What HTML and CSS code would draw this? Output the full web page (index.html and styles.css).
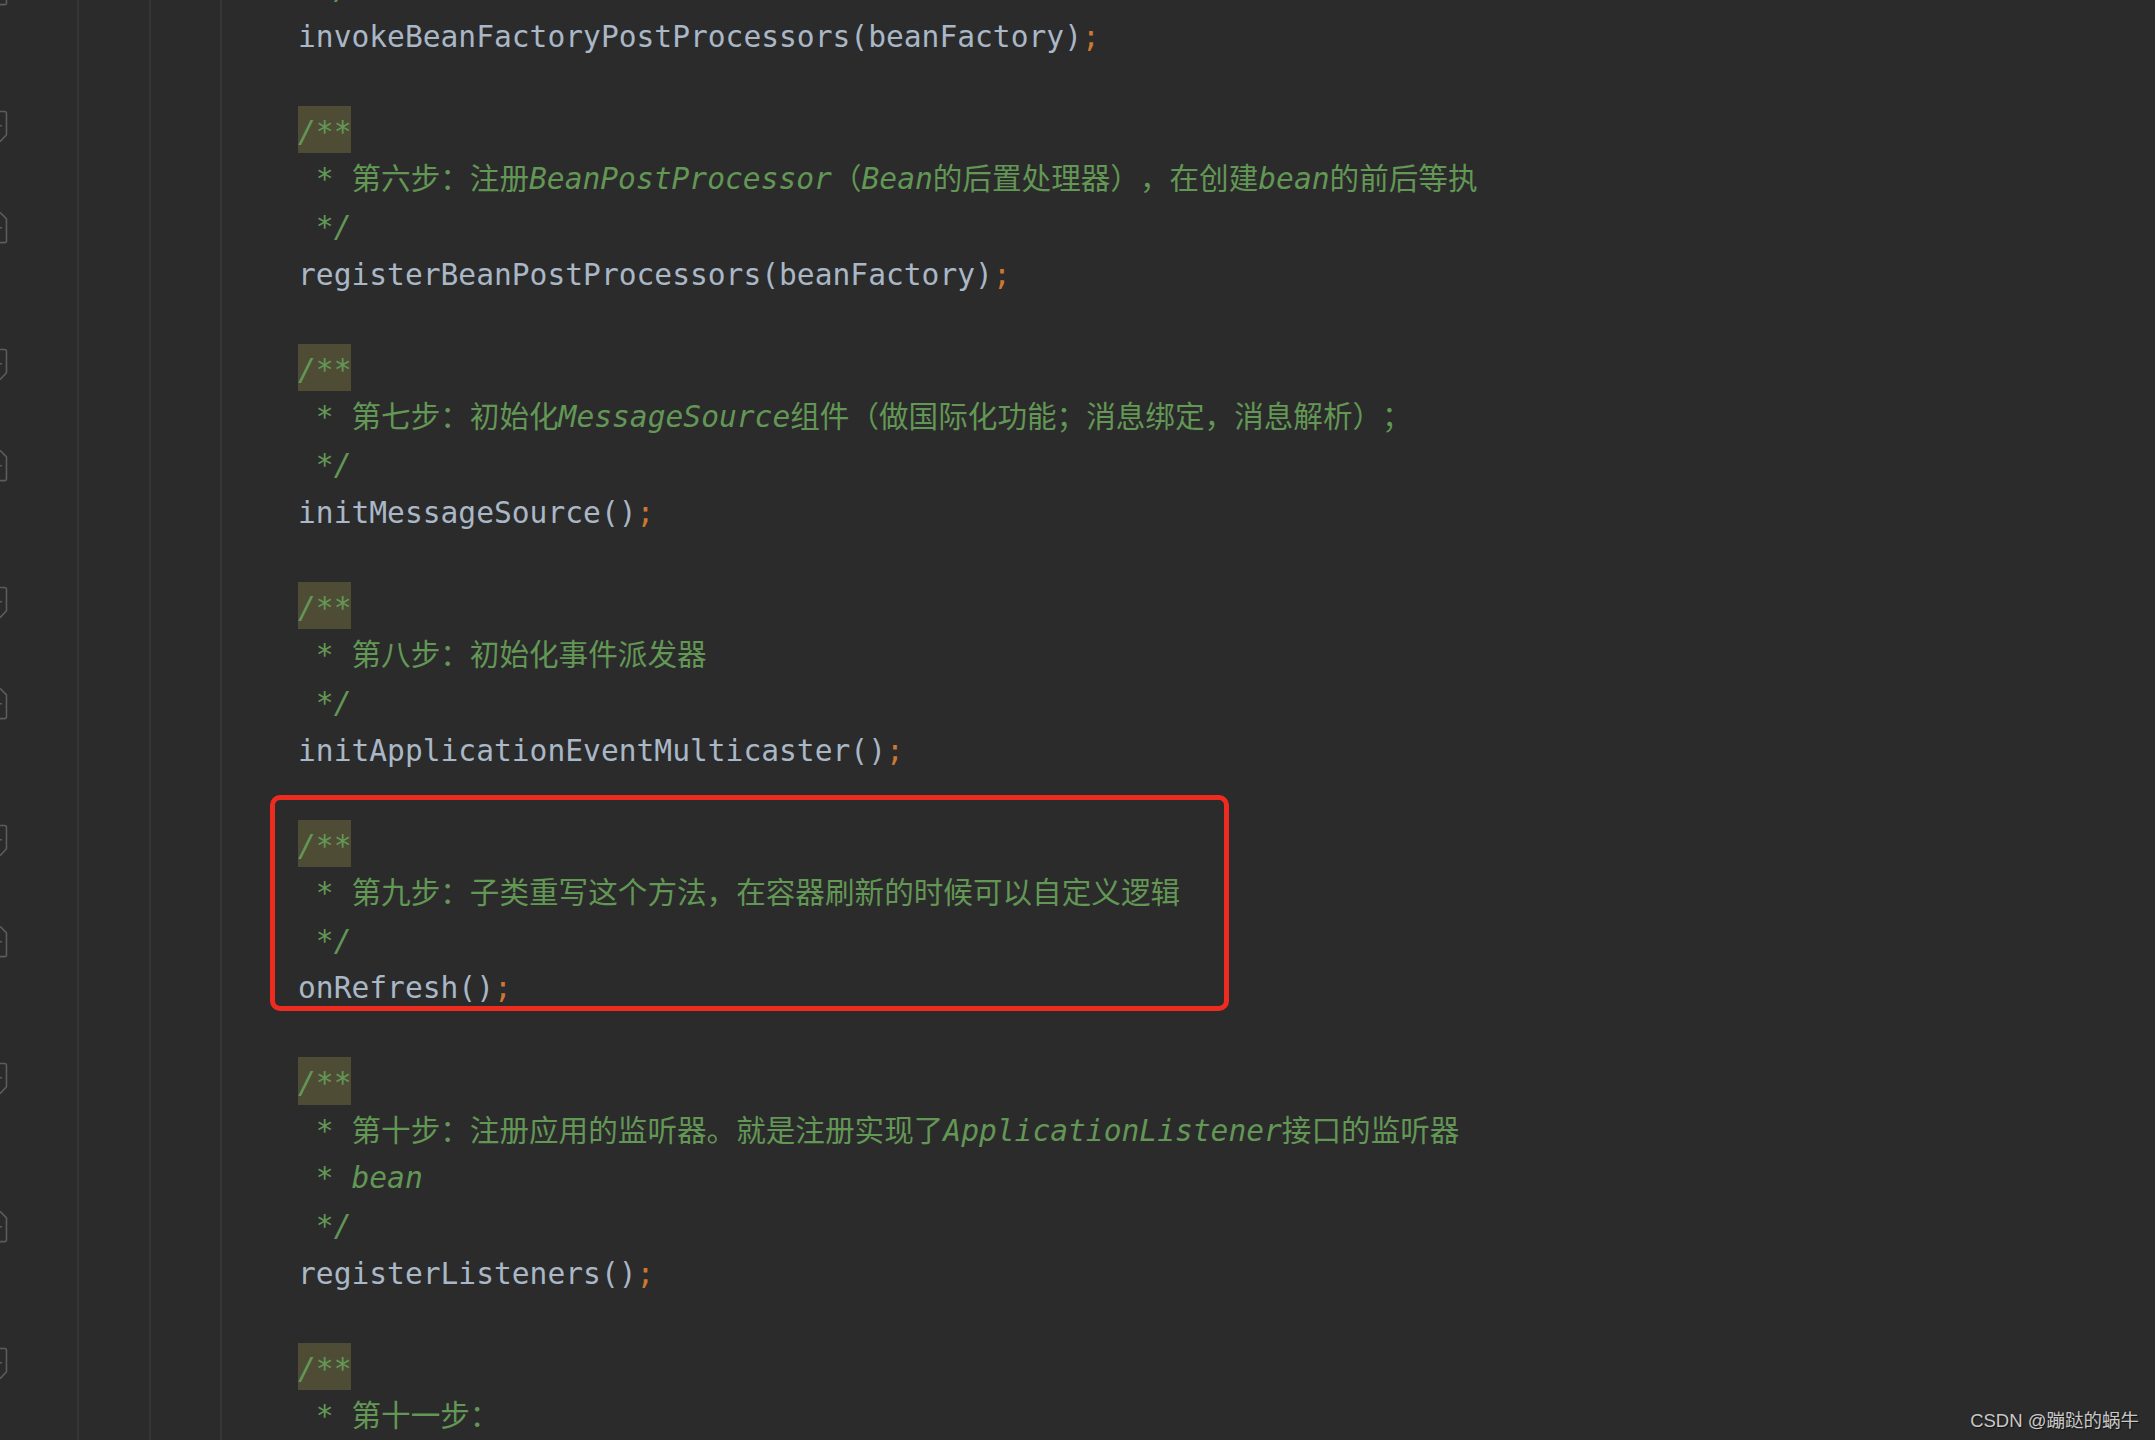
FILE: index.html
```html
<!DOCTYPE html>
<html lang="en">
<head>
    <meta charset="UTF-8">
    <meta name="viewport" content="width=device-width, initial-scale=1.0">
    <title>refresh()</title>
    <link rel="stylesheet" href="styles.css">
</head>
<body>
    <div class="editor">
        <!-- fold markers, one row per text line -->
        <div class="gutter">
            <div class="gl"><svg class="fold" viewBox="0 0 8 48"><path d="M0 11.5 L6.5 18 V40 Q6.5 42 4.5 42 H0 M0 27 H2"/></svg></div>
            <div class="gl"></div>
            <div class="gl"></div>
            <div class="gl"><svg class="fold" viewBox="0 0 8 48"><path d="M0 5.5 H4.5 Q6.5 5.5 6.5 7.5 V29 L0 36 M0 20 H2"/></svg></div>
            <div class="gl"></div>
            <div class="gl"><svg class="fold" viewBox="0 0 8 48"><path d="M0 11.5 L6.5 18 V40 Q6.5 42 4.5 42 H0 M0 27 H2"/></svg></div>
            <div class="gl"></div>
            <div class="gl"></div>
            <div class="gl"><svg class="fold" viewBox="0 0 8 48"><path d="M0 5.5 H4.5 Q6.5 5.5 6.5 7.5 V29 L0 36 M0 20 H2"/></svg></div>
            <div class="gl"></div>
            <div class="gl"><svg class="fold" viewBox="0 0 8 48"><path d="M0 11.5 L6.5 18 V40 Q6.5 42 4.5 42 H0 M0 27 H2"/></svg></div>
            <div class="gl"></div>
            <div class="gl"></div>
            <div class="gl"><svg class="fold" viewBox="0 0 8 48"><path d="M0 5.5 H4.5 Q6.5 5.5 6.5 7.5 V29 L0 36 M0 20 H2"/></svg></div>
            <div class="gl"></div>
            <div class="gl"><svg class="fold" viewBox="0 0 8 48"><path d="M0 11.5 L6.5 18 V40 Q6.5 42 4.5 42 H0 M0 27 H2"/></svg></div>
            <div class="gl"></div>
            <div class="gl"></div>
            <div class="gl"><svg class="fold" viewBox="0 0 8 48"><path d="M0 5.5 H4.5 Q6.5 5.5 6.5 7.5 V29 L0 36 M0 20 H2"/></svg></div>
            <div class="gl"></div>
            <div class="gl"><svg class="fold" viewBox="0 0 8 48"><path d="M0 11.5 L6.5 18 V40 Q6.5 42 4.5 42 H0 M0 27 H2"/></svg></div>
            <div class="gl"></div>
            <div class="gl"></div>
            <div class="gl"><svg class="fold" viewBox="0 0 8 48"><path d="M0 5.5 H4.5 Q6.5 5.5 6.5 7.5 V29 L0 36 M0 20 H2"/></svg></div>
            <div class="gl"></div>
            <div class="gl"></div>
            <div class="gl"><svg class="fold" viewBox="0 0 8 48"><path d="M0 11.5 L6.5 18 V40 Q6.5 42 4.5 42 H0 M0 27 H2"/></svg></div>
            <div class="gl"></div>
            <div class="gl"></div>
            <div class="gl"><svg class="fold" viewBox="0 0 8 48"><path d="M0 5.5 H4.5 Q6.5 5.5 6.5 7.5 V29 L0 36 M0 20 H2"/></svg></div>
            <div class="gl"></div>
        </div>

        <div class="text">
            <div class="line doc"> */</div>
            <div class="line">invokeBeanFactoryPostProcessors(beanFactory)<span class="semi">;</span></div>
            <div class="line"></div>
            <div class="line doc"><span class="open">/**</span></div>
            <div class="line doc"> * 第六步：注册BeanPostProcessor（Bean的后置处理器），在创建bean的前后等执</div>
            <div class="line doc"> */</div>
            <div class="line">registerBeanPostProcessors(beanFactory)<span class="semi">;</span></div>
            <div class="line"></div>
            <div class="line doc"><span class="open">/**</span></div>
            <div class="line doc"> * 第七步：初始化MessageSource组件（做国际化功能；消息绑定，消息解析）；</div>
            <div class="line doc"> */</div>
            <div class="line">initMessageSource()<span class="semi">;</span></div>
            <div class="line"></div>
            <div class="line doc"><span class="open">/**</span></div>
            <div class="line doc"> * 第八步：初始化事件派发器</div>
            <div class="line doc"> */</div>
            <div class="line">initApplicationEventMulticaster()<span class="semi">;</span></div>
            <div class="line"></div>
            <div class="mark">
                <div class="line doc"><span class="open">/**</span></div>
                <div class="line doc"> * 第九步：子类重写这个方法，在容器刷新的时候可以自定义逻辑</div>
                <div class="line doc"> */</div>
                <div class="line">onRefresh()<span class="semi">;</span></div>
            </div>
            <div class="line"></div>
            <div class="line doc"><span class="open">/**</span></div>
            <div class="line doc"> * 第十步：注册应用的监听器。就是注册实现了ApplicationListener接口的监听器</div>
            <div class="line doc"> * bean</div>
            <div class="line doc"> */</div>
            <div class="line">registerListeners()<span class="semi">;</span></div>
            <div class="line"></div>
            <div class="line doc"><span class="open">/**</span></div>
            <div class="line doc"> * 第十一步：</div>
        </div>
    </div>

    <div class="watermark">CSDN @蹦跶的蜗牛</div>
</body>
</html>
```

FILE: styles.css
```css
html, body {
  margin: 0;
  height: 100%;
  overflow: hidden;
  background: #2b2b2b;
}

.editor {
  display: flex;
  margin-top: -37px;
  height: calc(100vh + 37px);
  /* indent guides */
  background: linear-gradient(to right,
    transparent 77px, #353535 77px, #353535 79px,
    transparent 79px, transparent 149px, #353535 149px, #353535 151px,
    transparent 151px, transparent 220px, #353535 220px, #353535 222px,
    transparent 222px);
}

.gutter {
  width: 298px;
  flex-shrink: 0;
}

.gl {
  height: 47.6px;
}

.fold {
  display: block;
  width: 8px;
  height: 47.6px;
}

.fold path {
  fill: none;
  stroke: #5c5c5c;
  stroke-width: 1.6;
  stroke-linejoin: round;
}

.text {
  flex: 1;
  font-family: "DejaVu Sans Mono", "Noto Sans CJK SC", monospace;
  font-size: 29.6px;
  color: #a9b7c6;
  text-spacing-trim: space-all;
}

.line {
  height: 47.6px;
  line-height: 53px;
  white-space: pre;
}

.doc {
  color: #629755;
  font-style: italic;
  font-synthesis: none;
}

.semi {
  color: #cc7832;
}

.open {
  display: inline-block;
  height: 47.6px;
  vertical-align: top;
  background: #4f4c36;
}

/* red annotation box around step nine */
.mark {
  width: 959px;
  height: 216px;
  box-sizing: border-box;
  margin: -25px 0 -1px -28px;
  padding: 20px 0 0 23px;
  border: 5px solid #ee2b20;
  border-radius: 10px;
}

.watermark {
  position: absolute;
  right: 16px;
  bottom: 8px;
  font-family: "Liberation Sans", "Noto Sans CJK SC", sans-serif;
  font-size: 18.5px;
  color: #c9c9c9;
  text-shadow: 1px 1px 1px #111;
}
```
